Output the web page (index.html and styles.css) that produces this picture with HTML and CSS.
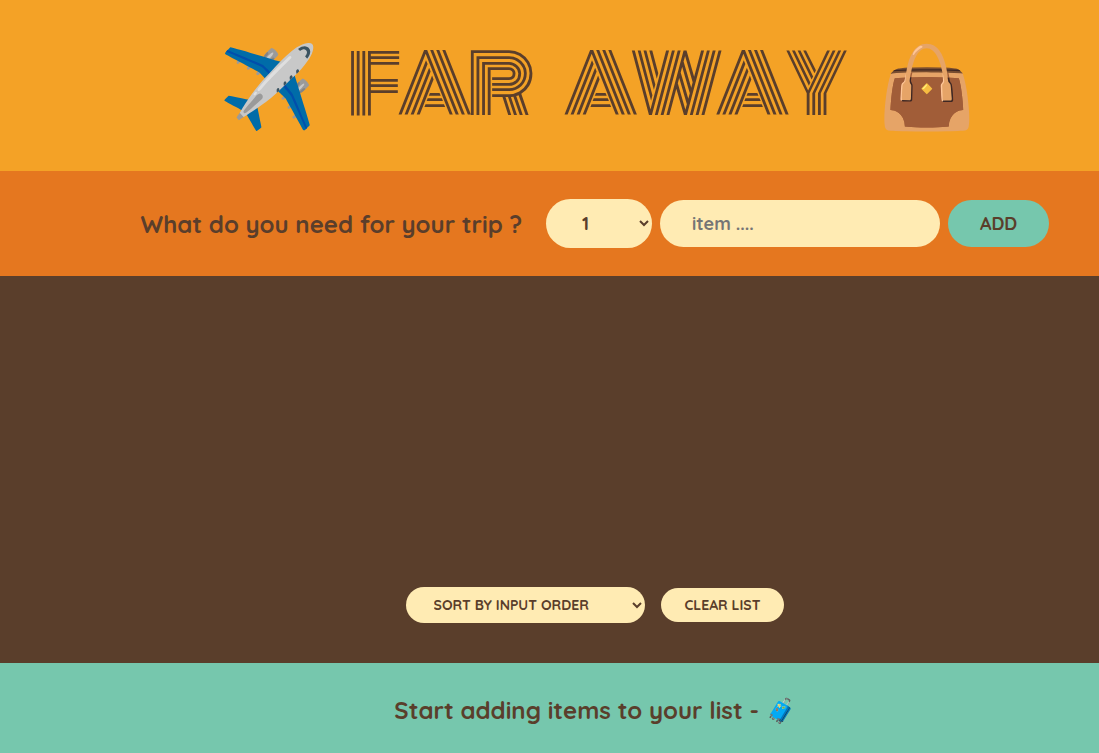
FILE: index.html
```html
<!DOCTYPE html>
<html lang="en">
<head>
<meta charset="utf-8">
<title>Far Away</title>
<link rel="stylesheet" href="styles.css">
</head>
<body>
<div class="app">
  <h1 class="logo">✈️ Far Away 👜</h1>
  <form class="add-form">
    <h3 class="question">What do you need for your trip ?</h3>
    <select class="quantity"><option>1</option></select>
    <input class="item" type="text" placeholder="item ....">
    <button class="add" type="button">ADD</button>
  </form>
  <main class="list">
    <div class="actions">
      <select class="sort"><option>SORT BY INPUT ORDER</option></select>
      <button class="clear" type="button">CLEAR LIST</button>
    </div>
  </main>
  <footer class="stats">Start adding items to your list - 🧳</footer>
</div>
</body>
</html>
```
FILE: styles.css
```css
* { box-sizing: border-box; margin: 0; padding: 0; }
body { overflow: hidden; font-family: Quicksand, Lato, sans-serif; color: #5a3e2b; }
.app { width: 1190px; height: 753px; display: grid; grid-template-rows: 171px 105px 387px 90px; }
.logo { background: #f4a226; padding: 23px 0 24px 0.6px; text-align: center; font: 400 80px Monoton, Lato, sans-serif; text-transform: uppercase; word-spacing: 30px; letter-spacing: -5px; white-space: nowrap; }
.add-form { background: #e5771f; display: flex; align-items: center; gap: 8px; padding-left: 140.5px; }
.question { width: 397.5px; font-size: 24px; line-height: 30px; white-space: nowrap; }
select, input, button { font: 700 18px Quicksand, Lato, sans-serif; color: #5a3e2b; background: #ffebb3; border: 0; border-radius: 100px; }
.quantity { width: 106px; height: 49px; padding: 0 32px; }
.item { width: 280px; height: 47px; padding: 0 32px; }
.add { width: 101px; height: 47px; background: #76c7ad; }
.list { background: #5a3e2b; display: flex; flex-direction: column; justify-content: flex-end; padding: 0 0 40px 405.6px; }
.actions { display: flex; align-items: center; gap: 16.4px; }
.sort { width: 239px; height: 36px; padding: 0 24px; font-size: 14px; }
.clear { width: 123px; height: 34px; font-size: 14px; }
.stats { background: #76c7ad; padding: 32px 0; text-align: center; font-size: 24px; font-weight: 700; white-space: nowrap; }
```
